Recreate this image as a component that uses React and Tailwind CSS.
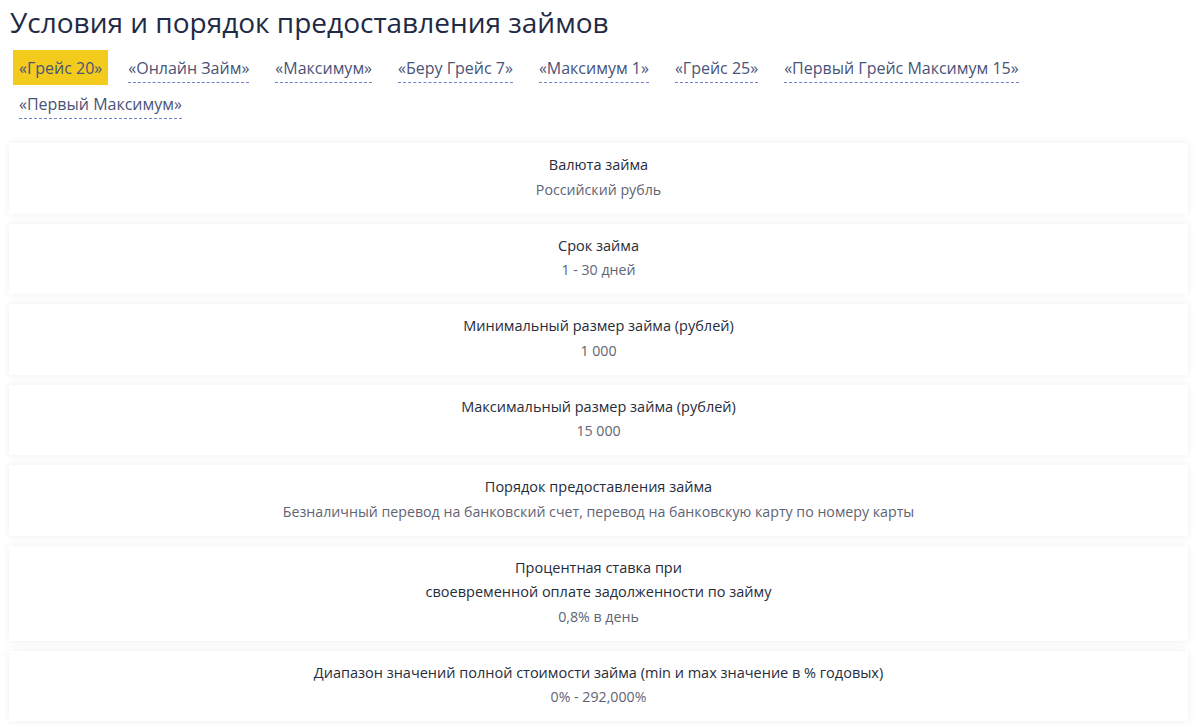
const tabs = [
    "«Грейс 20»",
    "«Онлайн Займ»",
    "«Максимум»",
    "«Беру Грейс 7»",
    "«Максимум 1»",
    "«Грейс 25»",
    "«Первый Грейс Максимум 15»",
    "«Первый Максимум»",
];

const rows = [
    { title: ["Валюта займа"], value: "Российский рубль" },
    { title: ["Срок займа"], value: "1 - 30 дней" },
    { title: ["Минимальный размер займа (рублей)"], value: "1 000" },
    { title: ["Максимальный размер займа (рублей)"], value: "15 000" },
    { title: ["Порядок предоставления займа"], value: "Безналичный перевод на банковский счет, перевод на банковскую карту по номеру карты" },
    { title: ["Процентная ставка при", "своевременной оплате задолженности по займу"], value: "0,8% в день" },
    { title: ["Диапазон значений полной стоимости займа (min и max значение в % годовых)"], value: "0% - 292,000%" },
];

export default function App() {
    return (
        <section className="min-h-screen bg-white px-[9px] pt-[4px] font-['Open_Sans',sans-serif]">

            {/* Heading */}
            <h1 className="text-[28px] leading-[36px] text-[#1f2a44] pl-px">Условия и порядок предоставления займов</h1>

            {/* Product tabs */}
            <div className="flex flex-wrap gap-x-[14px] gap-y-px mt-[10px] pl-[4px] pr-[10px]">
                {tabs.map((tab, i) => (
                    <button
                        key={tab}
                        className={"h-[35px] px-[6px] text-[16px] text-[#4a5378] " + (i == 0 ? "bg-[#f2cb1d]" : "")}
                    >
                        <span className={i == 0 ? "" : "border-b border-dashed border-[#6f82c9] pb-[3px]"}>{tab}</span>
                    </button>
                ))}
            </div>

            {/* Conditions */}
            <div className="flex flex-col gap-[10px] mt-[22px] w-[1179px]">
                {rows.map((row) => (
                    <div key={row.value} className="bg-white shadow-[0_0_8px_rgba(0,0,0,0.07)] pt-[10px] pb-[12px] text-center">
                        {row.title.map((line) => (
                            <p key={line} className="text-[14.5px] leading-[24.5px] text-[#262c3b]">{line}</p>
                        ))}
                        <p className="text-[14.2px] leading-6 text-[#5f6473]">{row.value}</p>
                    </div>
                ))}
            </div>
        </section>
    );
}
